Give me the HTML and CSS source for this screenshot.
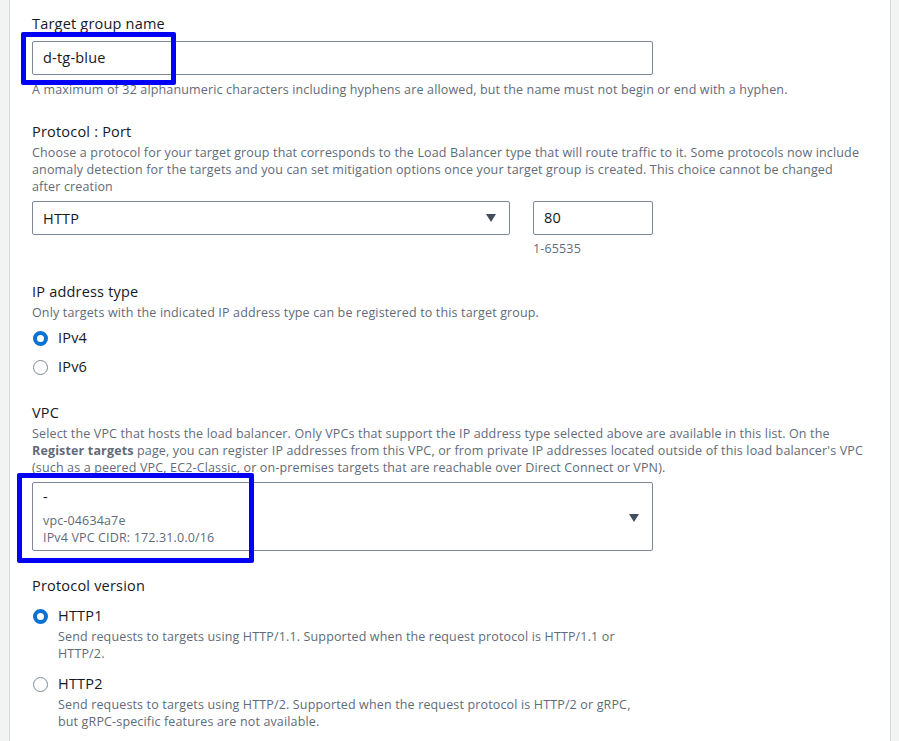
FILE: index.html
```html
<!DOCTYPE html>
<html lang="en">
<head>
    <meta charset="UTF-8">
    <meta name="viewport" content="width=device-width, initial-scale=1.0">
    <title>Target group</title>
    <link rel="stylesheet" href="styles.css">
</head>
<body>
    <div class="panel">
        <div class="field first">
            <div class="label">Target group name</div>
            <div class="mark-wrap">
                <div class="input wide">d-tg-blue</div>
                <span class="mark mark-name"></span>
            </div>
            <p class="hint">A maximum of 32 alphanumeric characters including hyphens are allowed, but the name must not begin or end with a hyphen.</p>
        </div>

        <div class="field second">
            <div class="label">Protocol : Port</div>
            <p class="desc">Choose a protocol for your target group that corresponds to the Load Balancer type that will route traffic to it. Some protocols now include anomaly detection for the targets and you can set mitigation options once your target group is created. This choice cannot be changed after creation</p>
            <div class="row">
                <div class="select proto">
                    <span>HTTP</span>
                    <span class="caret"></span>
                </div>
                <div class="port-col">
                    <div class="input port">80</div>
                    <p class="hint">1-65535</p>
                </div>
            </div>
        </div>

        <div class="field">
            <div class="label">IP address type</div>
            <p class="desc">Only targets with the indicated IP address type can be registered to this target group.</p>
            <div class="radios">
                <div class="radio-item">
                    <span class="radio checked"></span>
                    <span class="radio-label">IPv4</span>
                </div>
                <div class="radio-item">
                    <span class="radio"></span>
                    <span class="radio-label">IPv6</span>
                </div>
            </div>
        </div>

        <div class="field">
            <div class="label">VPC</div>
            <p class="desc">Select the VPC that hosts the load balancer. Only VPCs that support the IP address type selected above are available in this list. On the <b>Register targets</b> page, you can register IP addresses from this VPC, or from private IP addresses located outside of this load balancer's VPC (such as a peered VPC, EC2-Classic, or on-premises targets that are reachable over Direct Connect or VPN).</p>
            <div class="mark-wrap">
                <div class="select vpc">
                    <div class="vpc-text">
                        <div class="vpc-name">-</div>
                        <div class="vpc-meta">vpc-04634a7e</div>
                        <div class="vpc-meta">IPv4 VPC CIDR: 172.31.0.0/16</div>
                    </div>
                    <span class="caret"></span>
                </div>
                <span class="mark mark-vpc"></span>
            </div>
        </div>

        <div class="field">
            <div class="label">Protocol version</div>
            <div class="radios versions">
                <div class="radio-item">
                    <span class="radio checked"></span>
                    <div>
                        <div class="radio-label">HTTP1</div>
                        <p class="radio-desc">Send requests to targets using HTTP/1.1. Supported when the request protocol is HTTP/1.1 or HTTP/2.</p>
                    </div>
                </div>
                <div class="radio-item">
                    <span class="radio"></span>
                    <div>
                        <div class="radio-label">HTTP2</div>
                        <p class="radio-desc">Send requests to targets using HTTP/2. Supported when the request protocol is HTTP/2 or gRPC, but gRPC-specific features are not available.</p>
                    </div>
                </div>
            </div>
        </div>
    </div>
</body>
</html>
```

FILE: styles.css
```css
/* Formulario de target group */
body {
    margin: 0;
    padding: 0 8px 0 9px;
    background-color: #f2f3f3;
    font-family: "Open Sans", "Noto Sans", sans-serif;
    color: #16191f;
    height: 741px;
    overflow: hidden;
}
.panel {
    background-color: #fff;
    border-left: 1px solid #d5dbdb;
    border-right: 1px solid #d5dbdb;
    min-height: 741px;
    padding: 13px 20px 0 22px;
    box-sizing: border-box;
}
.field {
    margin-top: 24px;
    width: 832px;
}
.field.first {
    margin-top: 0;
}
.field.second {
    margin-top: 23px;
}
.label, .radio-label, .input, .select, .vpc-name {
    font-size: 14.5px;
    letter-spacing: 0.2px;
}
.label {
    line-height: 22px;
}
.desc, .hint, .radio-desc, .vpc-meta {
    margin: 0;
    font-size: 12.5px;
    letter-spacing: 0.15px;
    line-height: 17px;
    color: #5f6b7a;
}
.desc {
    margin-top: 1px;
}
.desc b {
    color: #5f6b7a;
}
.hint {
    margin-top: 6px;
}
.input, .select {
    box-sizing: border-box;
    border: 1px solid #7d8998;
    border-radius: 2px;
    background-color: #fff;
    color: #16191f;
}
.input {
    height: 34px;
    line-height: 32px;
    padding: 0 10px;
}
.wide {
    width: 621px;
}
.mark-wrap {
    position: relative;
    margin-top: 6px;
}
.mark {
    position: absolute;
    border: 5px solid #0000f5;
    border-radius: 2px;
    pointer-events: none;
}
.mark-name {
    left: -11px;
    top: -9px;
    width: 145px;
    height: 43px;
}
.mark-vpc {
    left: -15px;
    top: -9px;
    width: 227px;
    height: 80px;
}
.row {
    display: flex;
    gap: 23px;
    margin-top: 6px;
}
.select {
    display: flex;
    align-items: center;
    justify-content: space-between;
    padding: 0 13px 0 10px;
}
.proto {
    width: 478px;
    height: 34px;
}
.port {
    width: 120px;
}
.port-col .hint {
    margin-top: 5px;
}
.caret {
    width: 0;
    height: 0;
    border-left: 5.5px solid transparent;
    border-right: 5.5px solid transparent;
    border-top: 8px solid #414d5c;
}
.radios {
    margin-top: 6px;
    display: flex;
    flex-direction: column;
    gap: 7px;
}
.radio-item {
    display: flex;
    align-items: flex-start;
    gap: 10px;
}
.radio {
    box-sizing: border-box;
    width: 15px;
    height: 15px;
    margin: 4px 0 0 1px;
    border: 1.5px solid #7d8998;
    border-radius: 50%;
    flex-shrink: 0;
}
.radio.checked {
    border: 4.5px solid #0972d3;
}
.radio-label {
    line-height: 22px;
}
.versions {
    margin-top: 8px;
    gap: 11px;
}
.radio-desc {
    width: 580px;
    margin-top: 1px;
}
.vpc {
    width: 621px;
    height: 69px;
    padding: 3px 13px 0 10px;
}
.vpc-text {
    align-self: flex-start;
}
.vpc-name {
    line-height: 22px;
    margin-bottom: 4px;
}
```
